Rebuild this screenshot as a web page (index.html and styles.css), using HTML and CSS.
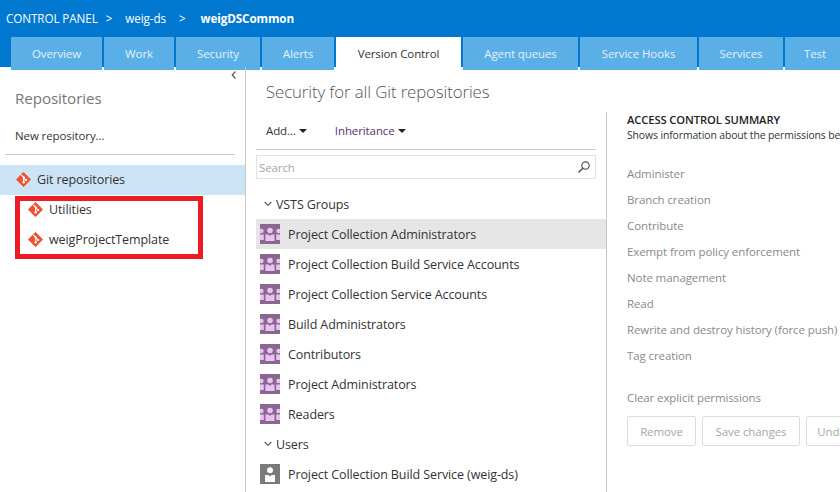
FILE: index.html
```html
<!DOCTYPE html>
<html>
	<head>
		<title>Security for all Git repositories</title>
		<link rel="stylesheet" href="styles.css">
	</head>
	<body>
		<svg class="defs" width="0" height="0">
			<symbol id="git" viewBox="0 0 16 16">
				<path d="M8 0.4 L15.6 8 L8 15.6 L0.4 8 Z" fill="#f0512f" stroke="#f0512f" stroke-linejoin="round"/>
				<path d="M5.6 3 L8.2 5.6 V11.2 M8.2 6 L10.8 8.6" fill="none" stroke="#fff" stroke-width="1.2"/>
				<circle cx="8.2" cy="5.6" r="1.2" fill="#fff"/>
				<circle cx="8.2" cy="11" r="1.3" fill="#fff"/>
				<circle cx="10.8" cy="8.6" r="1.2" fill="#fff"/>
			</symbol>
			<symbol id="group" viewBox="0 0 20 20">
				<rect width="20" height="20" fill="#8a6791"/>
				<g fill="#e9c3ef">
					<circle cx="10" cy="6.5" r="2.8"/>
					<path d="M5.5 10.5 H8.5 L10 12 L11.5 10.5 H14.5 V17 H5.5 Z"/>
					<circle cx="1.5" cy="7" r="2.2"/>
					<path d="M0 10.5 H3.8 V16 H0 Z"/>
					<circle cx="18.5" cy="7" r="2.2"/>
					<path d="M16.2 10.5 H20 V16 H16.2 Z"/>
				</g>
			</symbol>
			<symbol id="user" viewBox="0 0 20 20">
				<rect width="20" height="20" fill="#7a7a7a"/>
				<g fill="#fff">
					<circle cx="10" cy="6.3" r="3"/>
					<path d="M5 11 H8.5 L10 12.5 L11.5 11 H15 V18 H5 Z"/>
				</g>
			</symbol>
		</svg>

		<div class="header">
			<div class="crumbs">
				<span>CONTROL PANEL</span><span class="sep">&gt;</span><span>weig-ds</span><span class="sep">&gt;</span><b>weigDSCommon</b>
			</div>
			<div class="tabs">
				<a>Overview</a>
				<a>Work</a>
				<a>Security</a>
				<a>Alerts</a>
				<a class="active">Version Control</a>
				<a>Agent queues</a>
				<a>Service Hooks</a>
				<a>Services</a>
				<a>Test</a>
			</div>
		</div>

		<div class="content">
			<div class="left">
				<svg class="collapse" width="6" height="8" viewBox="0 0 6 8"><path d="M4.5 0.5 L1.2 4 L4.5 7.5" fill="none" stroke="#555" stroke-width="1.2"/></svg>
				<h2>Repositories</h2>
				<p class="newrepo">New repository...</p>
				<div class="repo repo-root"><svg class="git"><use href="#git"/></svg>Git repositories</div>
				<div class="repo repo-child"><svg class="git"><use href="#git"/></svg>Utilities</div>
				<div class="repo repo-child"><svg class="git"><use href="#git"/></svg>weigProjectTemplate</div>
				<div class="redbox"></div>
			</div>

			<div class="middle">
				<h1>Security for all Git repositories</h1>
				<div class="split">
					<div class="identities">
						<div class="toolbar">
							<span class="menu">Add...<i class="caret"></i></span>
							<span class="menu menu-purple">Inheritance<i class="caret"></i></span>
						</div>
						<div class="search">
							<span>Search</span>
							<svg width="14" height="14" viewBox="0 0 14 14"><circle cx="8.5" cy="5.5" r="3.7" fill="none" stroke="#555" stroke-width="1.2"/><path d="M5.8 8.2 L1.5 12.5" stroke="#555" stroke-width="1.6"/></svg>
						</div>
						<div class="grouphead"><svg width="8" height="6" viewBox="0 0 8 6"><path d="M0.7 1 L4 4.3 L7.3 1" fill="none" stroke="#555" stroke-width="1.1"/></svg>VSTS Groups</div>
						<div class="row selected"><svg class="avatar"><use href="#group"/></svg>Project Collection Administrators</div>
						<div class="row"><svg class="avatar"><use href="#group"/></svg>Project Collection Build Service Accounts</div>
						<div class="row"><svg class="avatar"><use href="#group"/></svg>Project Collection Service Accounts</div>
						<div class="row"><svg class="avatar"><use href="#group"/></svg>Build Administrators</div>
						<div class="row"><svg class="avatar"><use href="#group"/></svg>Contributors</div>
						<div class="row"><svg class="avatar"><use href="#group"/></svg>Project Administrators</div>
						<div class="row"><svg class="avatar"><use href="#group"/></svg>Readers</div>
						<div class="grouphead"><svg width="8" height="6" viewBox="0 0 8 6"><path d="M0.7 1 L4 4.3 L7.3 1" fill="none" stroke="#555" stroke-width="1.1"/></svg>Users</div>
						<div class="row"><svg class="avatar"><use href="#user"/></svg>Project Collection Build Service (weig-ds)</div>
					</div>

					<div class="summary">
						<h3>ACCESS CONTROL SUMMARY</h3>
						<p class="desc">Shows information about the permissions being granted to this identity</p>
						<ul class="perms">
							<li>Administer</li>
							<li>Branch creation</li>
							<li>Contribute</li>
							<li>Exempt from policy enforcement</li>
							<li>Note management</li>
							<li>Read</li>
							<li>Rewrite and destroy history (force push)</li>
							<li>Tag creation</li>
						</ul>
						<p class="clear">Clear explicit permissions</p>
						<div class="buttons">
							<button class="btn-remove">Remove</button>
							<button class="btn-save">Save changes</button>
							<button class="btn-undo">Undo changes</button>
						</div>
					</div>
				</div>
			</div>
		</div>
	</body>
</html>
```

FILE: styles.css
```css
html, body {
	margin: 0;
	padding: 0;
	height: 492px;
	overflow: hidden;
}

body {
	background: #fff;
	color: #333;
	font-family: "Open Sans", "Noto Sans", sans-serif;
	font-size: 12.5px;
	letter-spacing: -0.1px;
}

.defs {
	position: absolute;
}

/* header */
.header {
	background: #0078cf;
	height: 67px;
}

.crumbs {
	height: 37px;
	line-height: 37px;
	padding-left: 6px;
	color: #fff;
	font-size: 11.7px;
	white-space: nowrap;
	display: flex;
}

.crumbs .sep {
	margin: 0 13px 0 8px;
}

.crumbs .sep + span + .sep {
	margin: 0 15px 0 13px;
}

.crumbs b {
	font-weight: 700;
}

.tabs {
	display: grid;
	grid-template-columns: 91px 70px 84px 72px 125px 115px 117px 84px 60px;
	column-gap: 2px;
	padding-left: 11px;
	height: 30px;
}

.tabs a {
	background: #5bafe7;
	color: #e4f1fb;
	font-size: 11.5px;
	text-align: center;
	line-height: 33px;
	white-space: nowrap;
}

.tabs a.active {
	background: #fff;
	color: #333;
}

/* layout */
.content {
	display: flex;
	height: 425px;
}

.left {
	position: relative;
	width: 245px;
	flex: none;
	border-right: 1px solid #c8c8c8;
}

.middle {
	flex: 1;
	min-width: 0;
}

/* left panel */
.collapse {
	position: absolute;
	left: 231px;
	top: 4px;
}

.left h2 {
	margin: 0;
	padding: 21px 0 0 15px;
	font-size: 15.2px;
	line-height: 20px;
	font-weight: 400;
	color: #777;
}

.newrepo {
	margin: 19px 0 0 5px;
	padding: 0 0 9px 10px;
	width: 220px;
	font-size: 11.5px;
	line-height: 18px;
	border-bottom: 1px solid #c8c8c8;
}

.repo {
	display: flex;
	align-items: center;
	box-sizing: border-box;
	height: 30px;
	padding-bottom: 2px;
}

.repo-root {
	margin-top: 10px;
	padding-left: 16px;
	background: #cce4f6;
}

.repo-child {
	padding-left: 28px;
}

.git {
	width: 15px;
	height: 15px;
	margin-right: 6px;
	flex: none;
}

.redbox {
	position: absolute;
	left: 15px;
	top: 129px;
	width: 178px;
	height: 53px;
	border: 5px solid #ed1c24;
}

/* middle panel */
.middle h1 {
	margin: 0;
	padding: 15px 0 0 20px;
	font-size: 16.8px;
	line-height: 20px;
	font-weight: 300;
	color: #555;
}

.split {
	display: flex;
	margin-top: 10px;
}

.identities {
	width: 350px;
	flex: none;
	margin-left: 10px;
	border-right: 1px solid #c8c8c8;
	height: 380px;
}

.toolbar {
	width: 340px;
	height: 38px;
	box-sizing: border-box;
	padding: 10px 0 0 10px;
	border-bottom: 1px solid #c8c8c8;
	display: flex;
	font-size: 11.5px;
	line-height: 18px;
}

.menu {
	display: flex;
	align-items: center;
	height: 18px;
	margin-right: 28px;
}

.menu-purple {
	color: #5c2d6e;
}

.caret {
	margin-left: 3px;
	border-left: 4px solid transparent;
	border-right: 4px solid transparent;
	border-top: 4px solid #222;
}

.search {
	width: 340px;
	height: 24px;
	box-sizing: border-box;
	margin-top: 5px;
	padding: 0 4px 0 2px;
	border: 1px solid #e2e2e2;
	display: flex;
	align-items: center;
	justify-content: space-between;
	font-size: 11.5px;
	color: #a6a6a6;
}

.grouphead {
	display: flex;
	align-items: center;
	height: 30px;
	margin-top: 10px;
	padding-left: 8px;
	margin-bottom: 0;
}

.grouphead svg {
	margin-right: 4px;
}

.row {
	display: flex;
	align-items: center;
	height: 30px;
	padding-left: 4px;
	white-space: nowrap;
}

.row + .grouphead {
	margin-top: 0;
}

.row.selected {
	background: #e6e6e6;
}

.avatar {
	width: 20px;
	height: 20px;
	margin-right: 8px;
	flex: none;
}

/* summary panel */
.summary {
	flex: 1;
	min-width: 0;
	padding: 1px 0 0 20px;
	font-size: 11.5px;
	white-space: nowrap;
	overflow: hidden;
}

.summary h3 {
	margin: 0;
	font-size: 11.2px;
	line-height: 14px;
	font-weight: 600;
	color: #222;
}

.desc {
	margin: 1px 0 0;
	font-size: 10.4px;
	line-height: 14px;
}

.perms {
	list-style: none;
	margin: 19px 0 0;
	padding: 0;
	color: #8a8a8a;
}

.perms li {
	height: 26px;
	line-height: 26px;
}

.clear {
	margin: 16px 0 0;
	line-height: 26px;
	color: #8a8a8a;
}

.buttons {
	display: flex;
	column-gap: 6px;
	margin-top: 5px;
}

.buttons button {
	height: 30px;
	flex: none;
	padding: 0;
	background: #fff;
	border: 1px solid #dcdcdc;
	border-radius: 2px;
	color: #a6a6a6;
	font: inherit;
	letter-spacing: inherit;
}

.btn-remove {
	width: 69px;
}

.btn-save {
	width: 98px;
}

.btn-undo {
	width: 98px;
}
```
